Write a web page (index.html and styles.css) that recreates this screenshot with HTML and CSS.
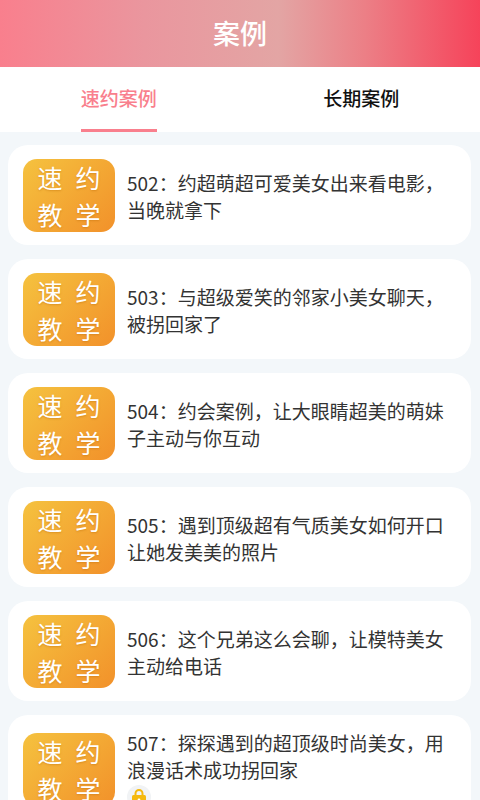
FILE: index.html
```html
<!DOCTYPE html>
<html lang="zh-CN">
<head>
  <meta charset="UTF-8">
  <meta name="viewport" content="width=device-width, initial-scale=1.0">
  <title>案例</title>
  <link rel="stylesheet" href="styles.css">
</head>
<body>
  <div class="header">案例</div>
  <div class="tabs">
    <div class="tab active"><span>速约案例</span></div>
    <div class="tab"><span>长期案例</span></div>
  </div>
  <div class="list">
    <div class="card">
      <div class="thumb"><span>速</span><span>约</span><span>教</span><span>学</span></div>
      <div class="info"><p>502：约超萌超可爱美女出来看电影，当晚就拿下</p></div>
    </div>
    <div class="card">
      <div class="thumb"><span>速</span><span>约</span><span>教</span><span>学</span></div>
      <div class="info"><p>503：与超级爱笑的邻家小美女聊天，被拐回家了</p></div>
    </div>
    <div class="card">
      <div class="thumb"><span>速</span><span>约</span><span>教</span><span>学</span></div>
      <div class="info"><p>504：约会案例，让大眼睛超美的萌妹子主动与你互动</p></div>
    </div>
    <div class="card">
      <div class="thumb"><span>速</span><span>约</span><span>教</span><span>学</span></div>
      <div class="info"><p>505：遇到顶级超有气质美女如何开口让她发美美的照片</p></div>
    </div>
    <div class="card">
      <div class="thumb"><span>速</span><span>约</span><span>教</span><span>学</span></div>
      <div class="info"><p>506：这个兄弟这么会聊，让模特美女主动给电话</p></div>
    </div>
    <div class="card card-locked">
      <div class="thumb"><span>速</span><span>约</span><span>教</span><span>学</span></div>
      <div class="info">
        <p>507：探探遇到的超顶级时尚美女，用浪漫话术成功拐回家</p>
        <div class="lock">
          <svg width="16" height="18" viewBox="0 0 16 18">
            <path d="M4.5 8V5.5a3.5 3.5 0 0 1 7 0V8" fill="none" stroke="#f5b90f" stroke-width="2"/>
            <rect x="1" y="7" width="14" height="11" rx="1.5" fill="#f5b90f"/>
            <circle cx="8" cy="12" r="1.4" fill="#fff"/>
          </svg>
        </div>
      </div>
    </div>
  </div>
</body>
</html>
```

FILE: styles.css
```css
* {
  box-sizing: border-box;
}
body {
  margin: 0;
  height: 800px;
  overflow: hidden;
  background: #f3f7fa;
  font-family: "Noto Sans CJK SC", "Liberation Sans", sans-serif;
}
.header {
  height: 67px;
  line-height: 66px;
  text-align: center;
  color: #fff;
  font-size: 27px;
  font-weight: 500;
  background: linear-gradient(90deg, #f97f8d 0%, #ea969e 30%, #e3a5a4 58%, #ec7f86 76%, #f6435a 100%);
}
.tabs {
  display: flex;
  gap: 5px;
  height: 65px;
  background: #fff;
}
.tab {
  flex: 1;
  display: flex;
  justify-content: center;
}
.tab span {
  height: 65px;
  line-height: 62px;
  font-size: 19px;
  font-weight: 500;
  color: #111;
}
.tab.active span {
  color: #f97f8d;
  border-bottom: 3px solid #f97f8d;
}
.list {
  padding: 13px 9px 0 8px;
  display: flex;
  flex-direction: column;
  gap: 14px;
}
.card {
  flex: none;
  height: 100px;
  display: flex;
  gap: 12px;
  padding: 14px 15px;
  background: #fff;
  border-radius: 20px;
}
.card-locked {
  height: 120px;
}
.card-locked .thumb {
  margin-top: 4px;
}
.thumb {
  flex: none;
  width: 92px;
  height: 73px;
  padding: 0 8px;
  display: grid;
  grid-template-columns: 1fr 1fr;
  align-items: center;
  justify-items: center;
  background: linear-gradient(135deg, #f5c23f 0%, #f2912a 100%);
  border-radius: 14px;
  color: #fff;
  font-size: 25px;
  line-height: 36px;
  text-shadow: 0 1px 2px rgba(180, 100, 0, 0.4);
}
.info {
  flex: 1;
  padding-top: 10px;
}
.card-locked .info {
  padding-top: 0;
}
.info p {
  margin: 0;
  font-size: 19px;
  line-height: 27px;
  color: #333;
}
.lock {
  width: 24px;
  height: 24px;
  margin-top: 2px;
  display: flex;
  align-items: center;
  justify-content: center;
  background: #f1f3f5;
  border-radius: 50%;
}
```
